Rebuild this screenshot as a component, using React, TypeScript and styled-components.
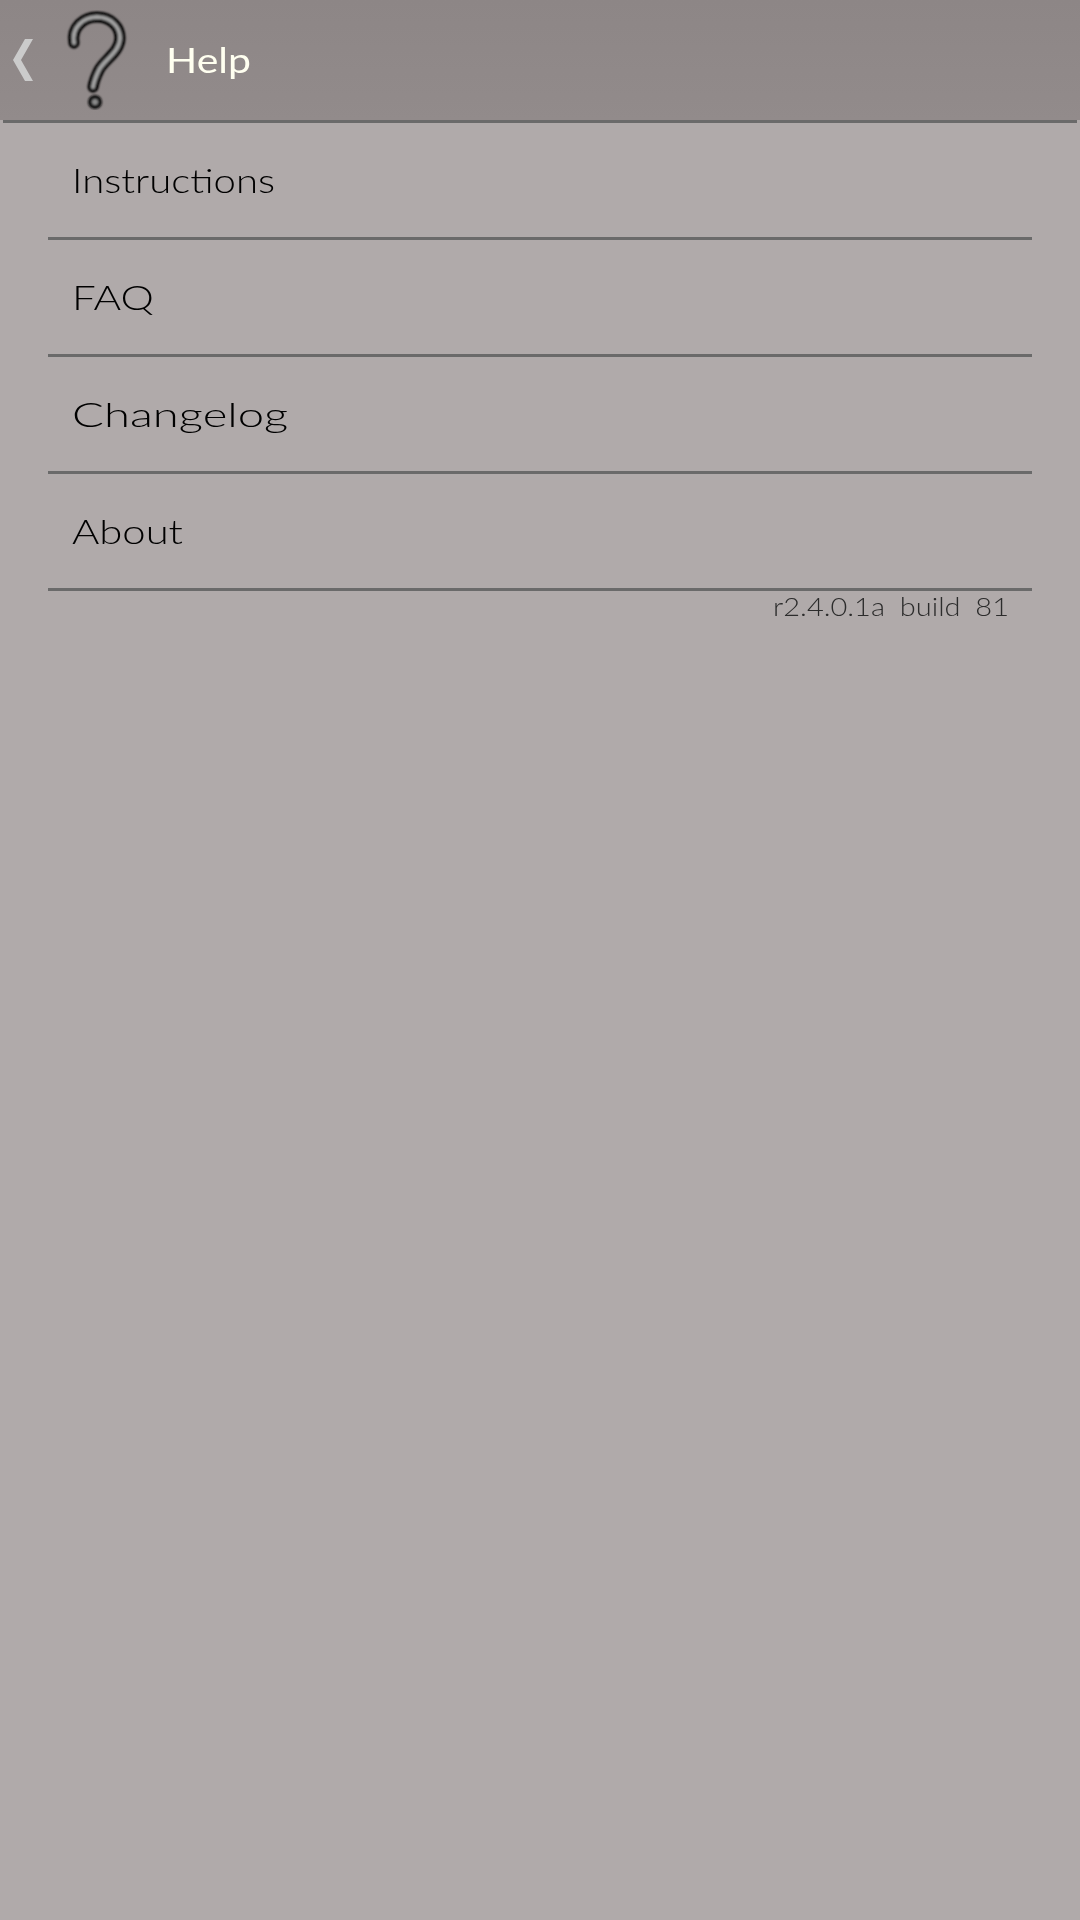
import React from 'react';
import styled, { createGlobalStyle } from 'styled-components';

const GlobalStyle = createGlobalStyle`
  html, body {
    margin: 0;
    padding: 0;
    background: #b0aaaa;
  }
`;

const Page = styled.div`
  width: 1080px;
  height: 1920px;
  overflow: hidden;
  background: #b0aaaa;
  font-family: Lato, "Liberation Sans", sans-serif;
  font-weight: 300;
`;

const Header = styled.header`
  height: 120px;
  display: flex;
  align-items: center;
  background: linear-gradient(to bottom, #8d8686, #928b8b);
`;

const BackIcon = styled.svg`
  width: 22px;
  height: 44px;
  margin-left: 12px;
  flex: none;
`;

const HelpIcon = styled.svg`
  width: 64px;
  height: 100px;
  margin-left: 30px;
  flex: none;
`;

const Title = styled.h1`
  margin: 0 0 2px 38px;
  font-size: 35px;
  font-weight: 400;
  color: #fffff0;
  transform: scaleX(1.17);
  transform-origin: left center;
`;

const HeaderRule = styled.div`
  height: 3px;
  margin: 0 3px;
  background: #6a6a6a;
`;

const Menu = styled.nav`
  margin: 0 48px;
  display: flex;
  flex-direction: column;
`;

const MenuRow = styled.div`
  height: 113px;
  padding: 0 0 1px 24px;
  border-bottom: 3px solid #6a6a6a;
  display: flex;
  align-items: center;
`;

const MenuLabel = styled.span<{ $stretch: number }>`
  font-size: 34px;
  font-weight: 300;
  color: #000;
  transform: scaleX(${p => p.$stretch});
  transform-origin: left center;
`;

const Version = styled.div`
  margin: 0 23px 0 0;
  text-align: right;
  font-size: 25px;
  font-weight: 300;
  word-spacing: 6px;
  color: #2c2c2c;
  transform: scaleX(1.16);
  transform-origin: right center;
`;

const items = [
  { label: 'Instructions', stretch: 1.18 },
  { label: 'FAQ', stretch: 1.24 },
  { label: 'Changelog', stretch: 1.39 },
  { label: 'About', stretch: 1.23 },
];

const questionPath = 'M10 33 C7 17 20 7 33 7 C47 7 56 17 56 28 C56 42 40 50 35 60 C32 66 30 71 29 77';

export default function App() {
  return (
    <Page>
      <GlobalStyle />
      <Header>
        <BackIcon viewBox="0 0 22 44">
          <polygon points="21,1 9,22 21,43 13,43 1,22 13,1" fill="#cbcbcb" />
        </BackIcon>
        <HelpIcon viewBox="0 0 64 100">
          <defs>
            <filter id="soft" x="-20%" y="-20%" width="140%" height="140%">
              <feGaussianBlur stdDeviation="1" />
            </filter>
          </defs>
          <g filter="url(#soft)">
            <path d={questionPath} fill="none" stroke="#000" strokeWidth="11" strokeLinecap="round" />
            <path d={questionPath} fill="none" stroke="#a2a2a2" strokeWidth="4" strokeLinecap="round" />
            <circle cx="31" cy="92" r="5" fill="#8c8c8c" stroke="#111" strokeWidth="4" />
          </g>
        </HelpIcon>
        <Title>Help</Title>
      </Header>
      <HeaderRule />
      <Menu>
        {items.map(item => (
          <MenuRow key={item.label}>
            <MenuLabel $stretch={item.stretch}>{item.label}</MenuLabel>
          </MenuRow>
        ))}
        <Version>r2.4.0.1a build 81</Version>
      </Menu>
    </Page>
  );
}
